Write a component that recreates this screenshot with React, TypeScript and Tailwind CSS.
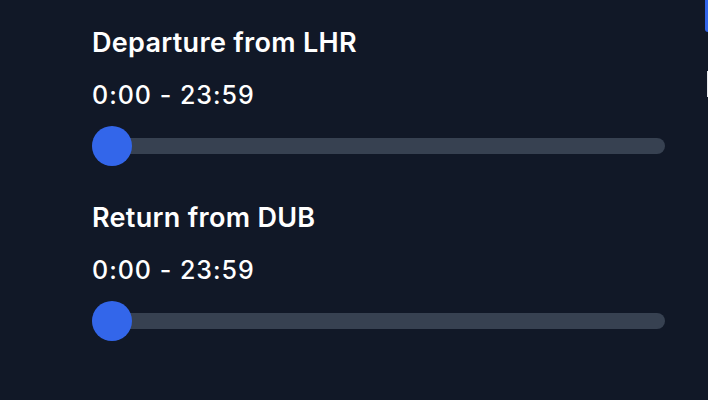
import React from 'react';

const TimeSlider: React.FC<{ title: string; range: string }> = ({ title, range }) => {
  return (
    <div className="flex flex-col">
      <h3 className="text-[27px] leading-[32px] font-semibold tracking-[0.3px] text-white">{title}</h3>
      <p className="mt-[20px] text-[25px] leading-[32px] font-medium tracking-[1px] text-white">{range}</p>
      <div className="relative mt-[15px] h-10 flex items-center">
        <div className="h-4 w-full rounded-full bg-[#374151]"></div>
        <div className="absolute left-0 top-0 w-10 h-10 rounded-full bg-[#3366ea]"></div>
      </div>
    </div>
  );
};

export default function App() {
  return (
    <div
      className="relative w-[708px] h-[400px] overflow-hidden bg-[#111827]"
      style={{ fontFamily: 'Inter, "Noto Sans", sans-serif' }}
    >
      <div className="flex flex-col gap-[36px] pt-[27px] pl-[92px] pr-[43px]">
        <TimeSlider title="Departure from LHR" range="0:00 - 23:59" />
        <TimeSlider title="Return from DUB" range="0:00 - 23:59" />
      </div>
      {/* edge of neighbouring panel */}
      <div className="absolute right-0 top-0 w-[3px] h-8 rounded-bl-md bg-[#3366ea]"></div>
      <div className="absolute right-0 top-[71px] w-[1px] h-[26px] bg-[#e5e7eb]"></div>
    </div>
  );
}
